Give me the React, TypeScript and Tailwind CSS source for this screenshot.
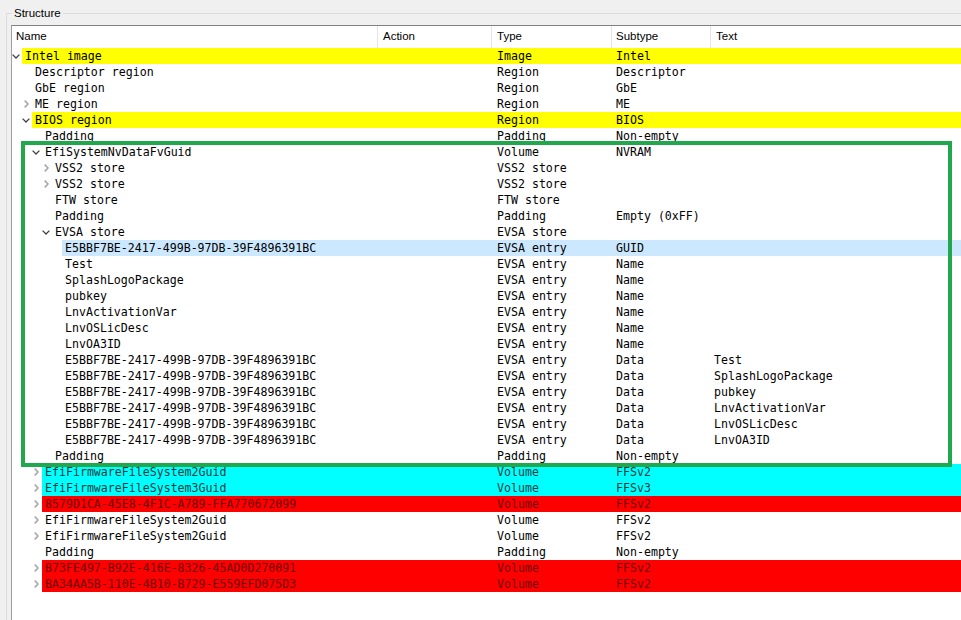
import React from "react";

type Row = [number, "e" | "c" | "", string, string, string, string, "" | "y" | "c" | "r" | "s"];

const G = "E5BBF7BE-2417-499B-97DB-39F4896391BC";

const rows: Row[] = [
  [0, "e", "Intel image", "Image", "Intel", "", "y"],
  [1, "", "Descriptor region", "Region", "Descriptor", "", ""],
  [1, "", "GbE region", "Region", "GbE", "", ""],
  [1, "c", "ME region", "Region", "ME", "", ""],
  [1, "e", "BIOS region", "Region", "BIOS", "", "y"],
  [2, "", "Padding", "Padding", "Non-empty", "", ""],
  [2, "e", "EfiSystemNvDataFvGuid", "Volume", "NVRAM", "", ""],
  [3, "c", "VSS2 store", "VSS2 store", "", "", ""],
  [3, "c", "VSS2 store", "VSS2 store", "", "", ""],
  [3, "", "FTW store", "FTW store", "", "", ""],
  [3, "", "Padding", "Padding", "Empty (0xFF)", "", ""],
  [3, "e", "EVSA store", "EVSA store", "", "", ""],
  [4, "", G, "EVSA entry", "GUID", "", "s"],
  [4, "", "Test", "EVSA entry", "Name", "", ""],
  [4, "", "SplashLogoPackage", "EVSA entry", "Name", "", ""],
  [4, "", "pubkey", "EVSA entry", "Name", "", ""],
  [4, "", "LnvActivationVar", "EVSA entry", "Name", "", ""],
  [4, "", "LnvOSLicDesc", "EVSA entry", "Name", "", ""],
  [4, "", "LnvOA3ID", "EVSA entry", "Name", "", ""],
  [4, "", G, "EVSA entry", "Data", "Test", ""],
  [4, "", G, "EVSA entry", "Data", "SplashLogoPackage", ""],
  [4, "", G, "EVSA entry", "Data", "pubkey", ""],
  [4, "", G, "EVSA entry", "Data", "LnvActivationVar", ""],
  [4, "", G, "EVSA entry", "Data", "LnvOSLicDesc", ""],
  [4, "", G, "EVSA entry", "Data", "LnvOA3ID", ""],
  [3, "", "Padding", "Padding", "Non-empty", "", ""],
  [2, "c", "EfiFirmwareFileSystem2Guid", "Volume", "FFSv2", "", "c"],
  [2, "c", "EfiFirmwareFileSystem3Guid", "Volume", "FFSv3", "", "c"],
  [2, "c", "8579D1CA-45E8-4F1C-A789-FFA770672099", "Volume", "FFSv2", "", "r"],
  [2, "c", "EfiFirmwareFileSystem2Guid", "Volume", "FFSv2", "", ""],
  [2, "c", "EfiFirmwareFileSystem2Guid", "Volume", "FFSv2", "", ""],
  [2, "", "Padding", "Padding", "Non-empty", "", ""],
  [2, "c", "B73FE497-B92E-416E-8326-45AD0D270091", "Volume", "FFSv2", "", "r"],
  [2, "c", "BA34AA5B-110E-4B10-B729-E559EFD075D3", "Volume", "FFSv2", "", "r"],
];

const indentCls = ["w-0", "w-[10px]", "w-[20px]", "w-[30px]", "w-[40px]"];
const nameCls = ["w-[356px]", "w-[346px]", "w-[336px]", "w-[326px]", "w-[316px]"];
const bgCls: Record<string, string> = {
  "": "text-black",
  y: "bg-[#ffff00] text-black",
  c: "bg-[#00ffff] text-[#143c3c]",
  r: "bg-[#ff0000] text-[#6e0000]",
  s: "bg-[#cce8ff] text-black",
};

function Arrow({ kind }: { kind: "e" | "c" | "" }) {
  if (kind === "e")
    return (
      <svg width="8" height="5" viewBox="0 0 8 5" className="ml-[0px]">
        <polyline points="0.6,0.6 4,4 7.4,0.6" fill="none" stroke="#404040" strokeWidth="1.3" />
      </svg>
    );
  if (kind === "c")
    return (
      <svg width="5" height="8" viewBox="0 0 5 8" className="ml-[2px]">
        <polyline points="0.7,0.6 4,4 0.7,7.4" fill="none" stroke="#a6a6a6" strokeWidth="1.6" />
      </svg>
    );
  return null;
}

export default function App() {
  return (
    <div className="relative w-[961px] h-[620px] overflow-hidden bg-[#f0f0f0]">
      {/* group box frame */}
      <div className="absolute left-[6px] top-[13px] right-0 bottom-0 border-l border-t border-[#dcdcdc]" />
      <div
        className="absolute left-[12px] top-[5px] px-[2px] bg-[#f0f0f0] text-[11.5px] leading-[16px] text-black"
        style={{ fontFamily: '"Liberation Sans", Arial, sans-serif' }}
      >
        Structure
      </div>
      {/* table */}
      <div className="absolute left-[11px] top-[25px] right-0 bottom-0 bg-white border-l border-t border-l-[#a0a0a0] border-t-[#828282]">
        <div
          className="flex h-[22px] items-center text-[11.5px] text-black"
          style={{ fontFamily: '"Liberation Sans", Arial, sans-serif' }}
        >
          <div className="w-[366px] h-full flex items-center pl-[4px] border-r border-[#e5e5e5]">Name</div>
          <div className="w-[114px] h-full flex items-center pl-[5px] border-r border-[#e5e5e5]">Action</div>
          <div className="w-[120px] h-full flex items-center pl-[5px] border-r border-[#e5e5e5]">Type</div>
          <div className="w-[99px] h-full flex items-center pl-[4px] border-r border-[#e5e5e5]">Subtype</div>
          <div className="flex-1 h-full flex items-center pl-[5px]">Text</div>
        </div>
        <div
          className="text-[11.6px] leading-[16px] whitespace-pre"
          style={{ fontFamily: '"DejaVu Sans Mono", "Liberation Mono", monospace' }}
        >
          {rows.map((r, i) => {
            const [lvl, arrow, name, type, sub, text, color] = r;
            return (
              <div key={i} className="flex h-[16px]">
                <div className={"shrink-0 " + indentCls[lvl]} />
                <div className="w-[10px] shrink-0 flex items-center">
                  <Arrow kind={arrow} />
                </div>
                <div className={"flex flex-1 " + bgCls[color]}>
                  <div className={"shrink-0 pl-[3px] overflow-hidden " + nameCls[lvl]}>{name}</div>
                  <div className="w-[114px] shrink-0" />
                  <div className="w-[120px] shrink-0 pl-[5px]">{type}</div>
                  <div className="w-[99px] shrink-0 pl-[4px]">{sub}</div>
                  <div className="flex-1 pl-[3px]">{text}</div>
                </div>
              </div>
            );
          })}
        </div>
      </div>
      {/* green highlight rectangle */}
      <div className="absolute left-[21px] top-[141px] w-[931px] h-[326px] border-[4px] border-[#22a84c] pointer-events-none" />
    </div>
  );
}
